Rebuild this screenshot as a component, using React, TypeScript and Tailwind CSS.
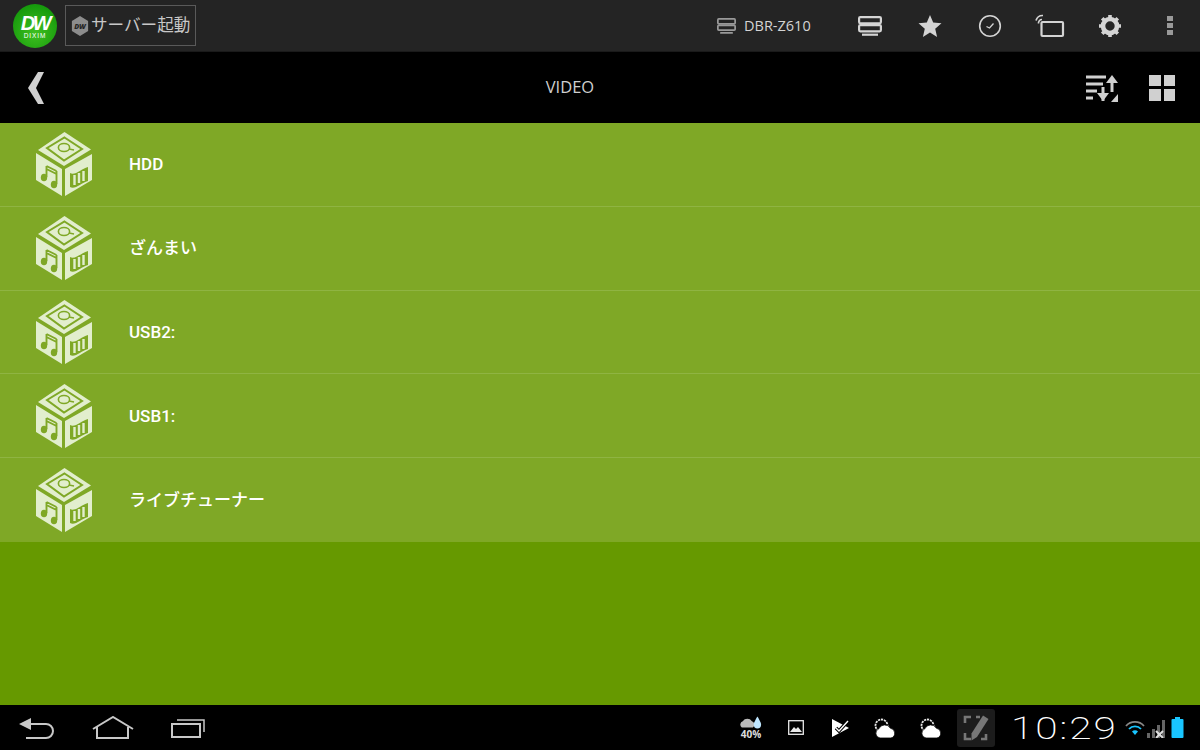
const rows = ["HDD", "ざんまい", "USB2:", "USB1:", "ライブチューナー"];

function CubeIcon() {
  return (
    <svg viewBox="0 0 56 64" className="h-16 w-14">
      <path d="M28.5 0 L55 17.5 L28 34 L2 18 Z" fill="#e2eecd" />
      <path d="M0 21 L26 37 L26 64 L0 48 Z" fill="#e2eecd" />
      <path d="M56 22 L29 37 L29 64 L56 48 Z" fill="#e2eecd" />
      <path d="M28.5 5.5 L46 17 L28 28.5 L11 16 Z" fill="none" stroke="#7fa826" strokeWidth="2" />
      <ellipse cx="28" cy="15.5" rx="5.6" ry="4" fill="none" stroke="#7fa826" strokeWidth="1.6" />
      <path d="M33 17 L38 18" stroke="#7fa826" strokeWidth="1.4" />
      <path d="M10.5 34 V45 M20.5 39 V52 M10.5 34 L20.5 39 M10.5 37 L20.5 42" fill="none" stroke="#7fa826" strokeWidth="1.9" />
      <ellipse cx="8" cy="45.5" rx="3.2" ry="3.8" fill="#7fa826" />
      <ellipse cx="18" cy="52.5" rx="3.2" ry="3.8" fill="#7fa826" />
      <path d="M34 41 C39 44 45 37 52 35 V49 C45 51 39 58 34 55 Z" fill="#7fa826" />
      <path d="M38.5 43 V53 M43 41 V51 M47.5 39 V49" stroke="#e2eecd" strokeWidth="2.4" />
    </svg>
  );
}

function ServerIcon({ className }: { className: string }) {
  return (
    <svg viewBox="0 0 24 20" className={className} fill="none" stroke="currentColor" strokeWidth="2.2">
      <rect x="1.1" y="1.1" width="21.8" height="6.2" rx="1.2" />
      <rect x="1.1" y="9.1" width="21.8" height="6.2" rx="1.2" />
      <path d="M4 18.7 H20" />
    </svg>
  );
}

function WeatherIcon({ className }: { className: string }) {
  return (
    <svg viewBox="0 0 22 20" className={className}>
      <circle cx="7.5" cy="7.5" r="6" fill="none" stroke="#e8e8e8" strokeWidth="1.8" strokeDasharray="2.2 0.8" />
      <path d="M6 20 a4.8 4.8 0 0 1 -1.2 -9.2 a6.5 6.5 0 0 1 11.6 -0.6 a5 5 0 0 1 0.6 9.8 Z" fill="#fff" stroke="#000" strokeWidth="0.8" />
    </svg>
  );
}

function TopBar() {
  return (
    <div className="flex h-[52px] items-center border-b border-[#1a1a1a] bg-[#242424] pr-[27px] pl-[13px]">
      <div className="flex h-[44px] w-[44px] flex-col items-center justify-center rounded-full bg-[radial-gradient(circle_at_50%_65%,#3fc020,#169a0c_75%)] text-white">
        <span className="mt-[3px] text-[20px] leading-[17px] font-black tracking-[-2.5px] italic [font-family:'Liberation_Sans',sans-serif]">
          DW
        </span>
        <span className="text-[6.5px] leading-[8px] tracking-[0.9px] [font-family:'Liberation_Sans',sans-serif]">DIXIM</span>
      </div>
      <div className="ml-[8px] flex h-[41px] w-[131px] items-center border border-[#5a5a5a] pl-[5px]">
        <svg viewBox="0 0 20 22" className="h-[20px] w-[18px]">
          <path d="M10 0 L19 5.5 V16.5 L10 22 L1 16.5 V5.5 Z" fill="#8c8c8c" />
          <text x="10" y="14" textAnchor="middle" fontSize="8" fontWeight="900" fontStyle="italic" fill="#242424">
            DW
          </text>
        </svg>
        <span className="ml-[2px] text-[16.6px] whitespace-nowrap text-[#c8c8c8]">サーバー起動</span>
      </div>
      <div className="ml-auto flex items-center">
        <ServerIcon className="h-[16px] w-[19px] text-[#999]" />
        <span className="ml-[8px] w-[66px] text-[14.5px] whitespace-nowrap text-[#d4d4d4]">DBR-Z610</span>
        <ServerIcon className="ml-[48px] h-[20px] w-[24px] text-[#d4d4d4]" />
        <svg viewBox="0 0 24 24" className="ml-[36px] h-[24px] w-[24px]">
          <path d="M12 1 L15.2 8.6 L23.5 9.3 L17.2 14.8 L19.1 23 L12 18.6 L4.9 23 L6.8 14.8 L0.5 9.3 L8.8 8.6 Z" fill="#d4d4d4" />
        </svg>
        <svg viewBox="0 0 24 24" className="ml-[36px] h-[24px] w-[24px] text-[#d4d4d4]" fill="none" stroke="currentColor">
          <circle cx="12" cy="12" r="10.3" strokeWidth="1.6" />
          <path d="M8.5 12.5 L11.5 14 L15.5 9.5" strokeWidth="1.3" />
        </svg>
        <svg viewBox="0 0 30 24" className="ml-[33px] h-[24px] w-[30px] text-[#d4d4d4]" fill="none" stroke="currentColor" strokeWidth="2.2">
          <rect x="6.5" y="8" width="21.5" height="14" rx="1" />
          <path d="M1 6.5 a7 7 0 0 1 7 -5 M3.5 9.5 a3.5 3.5 0 0 1 3.5 -4" strokeWidth="1.7" />
        </svg>
        <svg viewBox="0 0 24 24" className="ml-[33px] h-[24px] w-[24px] text-[#d4d4d4]">
          <circle cx="12" cy="12" r="7" fill="none" stroke="currentColor" strokeWidth="4.6" />
          <path
            d="M12 1 V5 M12 19 V23 M1 12 H5 M19 12 H23 M4.2 4.2 L7 7 M17 17 L19.8 19.8 M19.8 4.2 L17 7 M7 17 L4.2 19.8"
            stroke="currentColor"
            strokeWidth="3.6"
          />
        </svg>
        <div className="ml-[45px] flex w-[6px] flex-col gap-[2px]">
          <div className="h-[5px] bg-[#999]" />
          <div className="h-[5px] bg-[#999]" />
          <div className="h-[5px] bg-[#999]" />
        </div>
      </div>
    </div>
  );
}

function TitleBar() {
  return (
    <div className="flex h-[71px] items-center bg-black pr-[25px] pl-[28px]">
      <svg viewBox="0 0 16 32" className="h-[32px] w-[16px]">
        <path d="M10 0 H16 L8 16 L16 32 H10 L0 16 Z" fill="#d0d0d0" />
      </svg>
      <div className="flex-1 pl-[11px] text-center text-[16.5px] text-[#cfcfcf]">VIDEO</div>
      <svg viewBox="0 0 34 28" className="h-[28px] w-[34px] text-[#d0d0d0]" fill="none" stroke="currentColor" strokeWidth="3">
        <path d="M1 3 H21 M1 10 H18 M1 17 H12 M1 24 H8" />
        <path d="M18 27 V13 M27 18 V4" />
        <path d="M12 19 H24 L18 27 Z" fill="currentColor" stroke="none" />
        <path d="M21 9 H33 L27 1 Z" fill="currentColor" stroke="none" />
        <path d="M33 20 V28 H26 Z" fill="currentColor" stroke="none" />
      </svg>
      <div className="ml-[30px] grid h-[26px] w-[26px] grid-cols-2 gap-[3px]">
        <div className="bg-[#d0d0d0]" />
        <div className="bg-[#d0d0d0]" />
        <div className="bg-[#d0d0d0]" />
        <div className="bg-[#d0d0d0]" />
      </div>
    </div>
  );
}

function NavBar() {
  return (
    <div className="flex h-[45px] items-center bg-black pr-[16px] pl-[19px]">
      <svg viewBox="0 0 36 22" className="h-[22px] w-[36px] text-[#c8c8c8]" fill="none" stroke="currentColor" strokeWidth="2">
        <path d="M12 7 H27 a6.5 6.5 0 0 1 0 14 H7" />
        <path d="M0 7 L12 1 V13 Z" fill="currentColor" stroke="none" />
      </svg>
      <svg viewBox="0 0 42 24" className="ml-[37px] h-[24px] w-[42px] text-[#c8c8c8]" fill="none" stroke="currentColor" strokeWidth="2">
        <path d="M1 13 L21 1 L41 13 M5 11 V22 H36 V11" />
      </svg>
      <svg viewBox="0 0 34 20" className="ml-[37px] h-[20px] w-[34px] text-[#c8c8c8]" fill="none" stroke="currentColor" strokeWidth="2">
        <rect x="1" y="6" width="28" height="13" />
        <path d="M6 2 H33 V14" strokeWidth="1.5" />
      </svg>
      <div className="ml-auto flex items-center">
        <div className="flex w-[24px] flex-col items-center">
          <svg viewBox="0 0 24 13" className="h-[13px] w-[22px]">
            <path d="M2 12 a4 4 0 0 1 1 -7 a6 6 0 0 1 10 0 a4 4 0 0 1 1 7 Z" fill="#bbb" />
            <path d="M19 0 C22 5 23 7 23 9 a4 4 0 0 1 -8 0 C15 7 16 5 19 0 Z" fill="#bfe6ff" />
          </svg>
          <span className="text-[10px] leading-[11px] font-bold text-[#ddd]">40%</span>
        </div>
        <svg viewBox="0 0 16 15" className="ml-[25px] h-[15px] w-[16px]">
          <rect x="0.7" y="0.7" width="14.6" height="13.6" fill="none" stroke="#e8e8e8" strokeWidth="1.3" />
          <path d="M2 12 L6 7 L8 9 L10 7 L14 12 Z" fill="#e8e8e8" />
        </svg>
        <svg viewBox="0 0 18 20" className="ml-[28px] h-[20px] w-[18px]">
          <path d="M0 1 L17 10 L0 19 Z" fill="#fff" />
          <path d="M4 10 L7 13 L16 3" fill="none" stroke="#000" strokeWidth="3.4" />
          <path d="M4 10 L7 13 L16 3" fill="none" stroke="#fff" strokeWidth="1.4" />
        </svg>
        <WeatherIcon className="ml-[24px] h-[20px] w-[22px]" />
        <WeatherIcon className="ml-[24px] h-[20px] w-[22px]" />
        <div className="ml-[15px] flex h-[38px] w-[38px] items-center justify-center rounded-[3px] bg-[#1c1c1c]">
          <svg viewBox="0 0 26 26" className="h-[26px] w-[26px]" fill="none" stroke="#777" strokeWidth="2.6">
            <path d="M8 2 H2 V8 M2 18 V24 H8 M18 24 H23 V19 M13 2 H17" />
            <path d="M20 0.5 L25.5 4 L14 22 L8.5 25.5 L8.5 18.5 Z" fill="#777" stroke="none" />
          </svg>
        </div>
        <span className="ml-[16px] w-[108px] origin-left scale-x-[1.27] text-[32px] leading-[32px] font-extralight tracking-[1.5px] whitespace-nowrap text-white [font-family:Roboto,sans-serif]">
          10:29
        </span>
        <svg viewBox="0 0 20 14" className="ml-[6px] h-[14px] w-[20px]" fill="none">
          <path d="M1 5 a12 12 0 0 1 18 0" stroke="#888" strokeWidth="1.8" />
          <path d="M4 8 a8 8 0 0 1 12 0" stroke="#19c5ff" strokeWidth="1.8" />
          <path d="M7 10.5 L10 14 L13 10.5 a4 4 0 0 0 -6 0 Z" fill="#19c5ff" />
        </svg>
        <svg viewBox="0 0 20 20" className="h-[20px] w-[20px]">
          <path d="M2 15 h3 v5 h-3 Z M7 11 h3 v9 h-3 Z M12 7 h3 v13 h-3 Z M17 2 h3 v18 h-3 Z" fill="#666" />
          <path d="M11 13 L18 20 M18 13 L11 20" stroke="#ddd" strokeWidth="2" />
        </svg>
        <svg viewBox="0 0 12 21" className="ml-[6px] h-[21px] w-[13px]">
          <path d="M3.5 0 H8.5 V2 H11 a1 1 0 0 1 1 1 V20 a1 1 0 0 1 -1 1 H1 a1 1 0 0 1 -1 -1 V3 a1 1 0 0 1 1 -1 H3.5 Z" fill="#19c5ff" />
        </svg>
      </div>
    </div>
  );
}

export default function App() {
  return (
    <div className="flex h-[750px] w-[1200px] flex-col overflow-hidden bg-[#669900] font-['Open_Sans','Noto_Sans_CJK_JP',sans-serif]">
      <TopBar />
      <TitleBar />
      <div className="grid h-[419px] grid-rows-5">
        {rows.map((name, i) => (
          <div
            key={name}
            className={`flex items-center bg-[#7fa826] pl-[36px] ${i < 4 ? "border-b border-[#8fb442]" : ""}`}
          >
            <CubeIcon />
            <span className="ml-[37px] pt-[1px] font-['Roboto','Noto_Sans_CJK_JP',sans-serif] text-[17px] font-medium text-white">
              {name}
            </span>
          </div>
        ))}
      </div>
      <div className="flex-1" />
      <NavBar />
    </div>
  );
}
